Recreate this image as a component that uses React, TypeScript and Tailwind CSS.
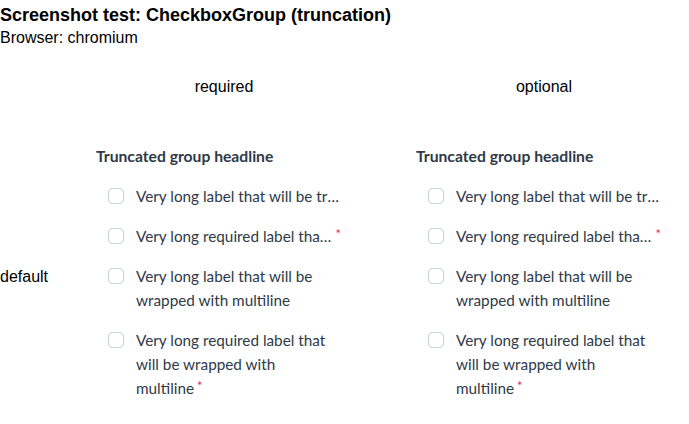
import React from "react";

const labelFont = { fontFamily: "Lato, 'Open Sans', sans-serif" } as React.CSSProperties;

function Box() {
  return <span className="mt-[4px] h-4 w-4 shrink-0 rounded-[4px] border border-[#c9d1db] bg-white" />;
}

function Group() {
  return (
    <div className="flex flex-col pl-8" style={labelFont}>
      <div className="h-5 text-[15.7px] leading-5 font-bold text-[#2e3a47]">Truncated group headline</div>
      <div className="mt-[18px] flex flex-col gap-4 pl-3 text-[15.3px] leading-6 text-[#2e3a47]">
        <div className="flex gap-3">
          <Box />
          <span className="w-[210px] truncate">Very long label that will be truncated</span>
        </div>
        <div className="flex gap-3">
          <Box />
          <span className="flex max-w-[205px] items-start">
            <span className="truncate">Very long required label that will be truncated</span>
            <span className="ml-[4px] mt-[4px] shrink-0 text-[13px] leading-none text-[#e0333f]">*</span>
          </span>
        </div>
        <div className="flex gap-3">
          <Box />
          <span className="w-[200px]">Very long label that will be wrapped with multiline</span>
        </div>
        <div className="flex gap-3">
          <Box />
          <span className="w-[200px]">
            Very long required label that will be wrapped with multiline
            <span className="relative top-[-3px] ml-[3px] text-[13px] leading-none text-[#e0333f]">*</span>
          </span>
        </div>
      </div>
    </div>
  );
}

export default function App() {
  const sans = { fontFamily: "'Liberation Sans', Arial, sans-serif" } as React.CSSProperties;
  return (
    <div className="bg-white text-black" style={sans}>
      <h1 className="pt-[4px] text-[18px] leading-[22px] font-bold">Screenshot test: CheckboxGroup (truncation)</h1>
      <div className="text-[16px] leading-[24px]">Browser: chromium</div>
      <div className="grid grid-cols-[64px_320px_320px]">
        <div />
        <div className="flex h-[56px] items-end justify-center pb-[7px] text-[16px]">required</div>
        <div className="flex h-[56px] items-end justify-center pb-[7px] text-[16px]">optional</div>
        <div className="pt-[159px] text-[16px] leading-6">default</div>
        <div className="pt-[40px]"><Group /></div>
        <div className="pt-[40px]"><Group /></div>
      </div>
    </div>
  );
}
